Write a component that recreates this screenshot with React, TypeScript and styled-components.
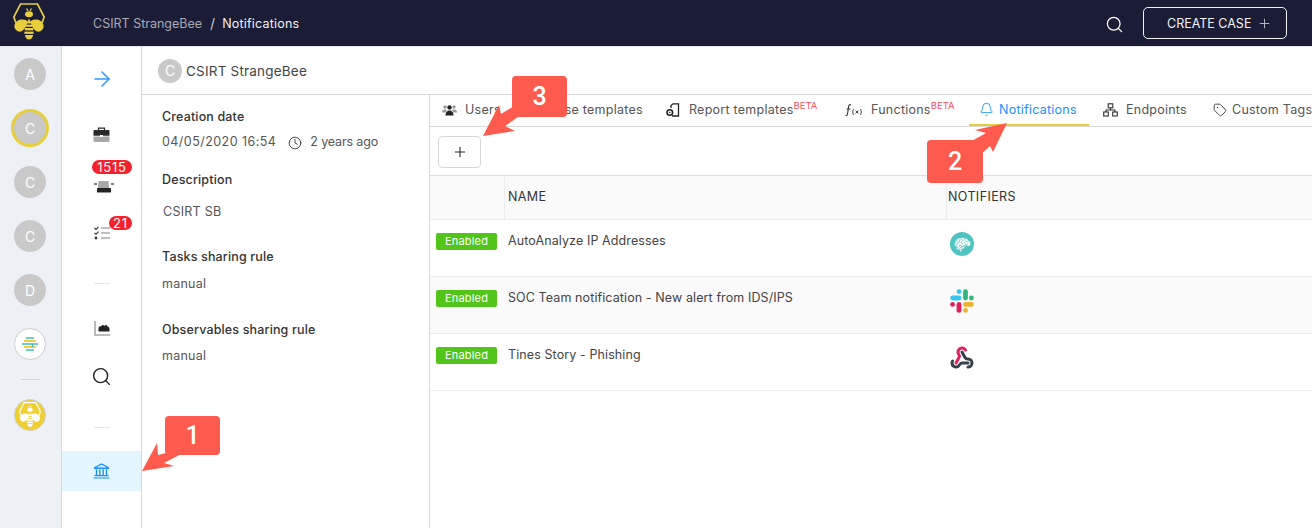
import React from "react";
import styled, { createGlobalStyle } from "styled-components";
import { ArrowRight, Search, Plus, Clock, Bell, Tag } from "lucide-react";
import { GiBrain } from "react-icons/gi";

const Global = createGlobalStyle`
  html, body { margin: 0; padding: 0; background: #fff; }
  body { font-family: Inter, "Noto Sans", "Liberation Sans", sans-serif; overflow: hidden; }
  #root { width: 1312px; height: 528px; }
  * { box-sizing: border-box; }
`;

const Page = styled.div`
  position: relative;
  width: 1312px;
  height: 528px;
  overflow: hidden;
  display: flex;
  flex-direction: column;
`;
const TopBar = styled.header`
  height: 46px;
  flex: none;
  background: #1b1c36;
  display: flex;
  align-items: center;
  padding: 0 25px 0 13px;
`;
const LogoBox = styled.div`
  width: 32px;
  height: 38px;
  margin-right: 48px;
  margin-top: -2px;
`;
const Crumb = styled.span<{ $active?: boolean }>`
  font-size: 12.5px;
  letter-spacing: ${(p) => (p.$active ? "0.2px" : "0")};
  color: ${(p) => (p.$active ? "#f2f2f4" : "#a9aab4")};
  font-weight: 400;
`;
const CrumbSep = styled.span`
  color: #c8c8cf;
  font-size: 14px;
  margin: 0 7px 0 8px;
`;
const Grow = styled.div`
  flex: 1;
`;
const TopSearch = styled.div`
  display: flex;
  color: #fff;
  margin-right: 19px;
  margin-top: 2px;
`;
const CreateBtn = styled.button`
  width: 144px;
  height: 32px;
  border: 1px solid #f2f2f4;
  border-radius: 5px;
  background: transparent;
  color: #f2f2f4;
  font: 400 12.5px Inter, sans-serif;
  display: flex;
  align-items: center;
  padding: 0 0 0 23px;
  gap: 6px;
  svg { color: #bcbcc4; }
`;
const Body = styled.div`
  flex: 1;
  display: flex;
  min-height: 0;
`;
const Rail = styled.aside`
  width: 62px;
  flex: none;
  background: #edf1f5;
  border-right: 1px solid #d5d7da;
  border-top: 1px solid #e4e6e9;
  padding-right: 1px;
  display: flex;
  flex-direction: column;
  align-items: center;
`;
const RailItem = styled.div`
  height: 54px;
  flex: none;
  display: flex;
  align-items: center;
  justify-content: center;
`;
const OrgAvatar = styled.div<{ $selected?: boolean }>`
  width: ${(p) => (p.$selected ? "38px" : "32px")};
  height: ${(p) => (p.$selected ? "38px" : "32px")};
  border-radius: 50%;
  background: #c9c9c9;
  color: #fff;
  font-size: 14px;
  display: flex;
  align-items: center;
  justify-content: center;
  border: ${(p) => (p.$selected ? "3px solid #e8cd3c" : "none")};
`;
const LogoAvatar = styled.div<{ $bg: string }>`
  width: 32px;
  height: 32px;
  border-radius: 50%;
  background: ${(p) => p.$bg};
  border: 1px solid #cfcfcf;
  display: flex;
  align-items: center;
  justify-content: center;
`;
const RailDivider = styled.div`
  width: 19px;
  height: 1px;
  background: #d2d4d7;
  margin: 8px 0;
`;
const Nav = styled.nav`
  width: 80px;
  flex: none;
  border-right: 1px solid #d5d7da;
  border-top: 1px solid #e4e6e9;
  display: flex;
  flex-direction: column;
  align-items: center;
  padding-top: 8px;
`;
const NavItem = styled.div<{ $top?: number; $h?: number; $active?: boolean }>`
  position: relative;
  width: 100%;
  height: ${(p) => p.$h ?? 48}px;
  margin-top: ${(p) => p.$top ?? 0}px;
  display: flex;
  align-items: center;
  justify-content: center;
  flex: none;
  background: ${(p) => (p.$active ? "#e4f6fd" : "transparent")};
  color: ${(p) => (p.$active ? "#1890ff" : "#222")};
`;
const NavDivider = styled.div<{ $top: number }>`
  width: 16px;
  height: 1px;
  background: #e6e6e6;
  margin-top: ${(p) => p.$top}px;
`;
const Count = styled.span<{ $w: number; $top: number }>`
  position: absolute;
  top: ${(p) => p.$top}px;
  left: ${(p) => 70 - p.$w}px;
  width: ${(p) => p.$w}px;
  height: 14px;
  border-radius: 7px;
  background: #f5222d;
  color: #fff;
  font-size: 13px;
  letter-spacing: 0.8px;
  line-height: 14px;
  text-align: center;
`;
const Main = styled.main`
  flex: 1;
  display: flex;
  flex-direction: column;
  min-width: 0;
  border-top: 1px solid #e4e6e9;
`;
const TitleBar = styled.div`
  height: 48px;
  flex: none;
  border-bottom: 1px solid #d9d9d9;
  display: flex;
  align-items: center;
  padding: 0 16px;
  gap: 4px;
`;
const TitleAvatar = styled.div`
  width: 24px;
  height: 24px;
  border-radius: 50%;
  background: #c9c9c9;
  color: #fff;
  font-size: 14px;
  display: flex;
  align-items: center;
  justify-content: center;
`;
const Title = styled.span`
  font-size: 13.5px;
  letter-spacing: 0.2px;
  color: #444;
`;
const Split = styled.div`
  flex: 1;
  display: flex;
  min-height: 0;
`;
const Details = styled.section`
  width: 288px;
  flex: none;
  border-right: 1px solid #d9d9d9;
  padding: 14px 0 0 20px;
`;
const Label = styled.div<{ $top?: number }>`
  font-size: 12.5px;
  letter-spacing: 0.15px;
  line-height: 16px;
  font-weight: 500;
  color: #333;
  margin-top: ${(p) => p.$top ?? 0}px;
`;
const Value = styled.div<{ $top: number; $indent?: number }>`
  display: flex;
  align-items: center;
  font-size: 12.5px;
  letter-spacing: 0.25px;
  line-height: 16px;
  color: #555;
  margin-top: ${(p) => p.$top}px;
  margin-left: ${(p) => p.$indent ?? 0}px;
`;
const DateText = styled.span`
  letter-spacing: 0.45px;
`;
const AgoText = styled.span`
  letter-spacing: -0.15px;
`;
const ClockWrap = styled.span`
  display: flex;
  margin: 1px 8px 0 12px;
`;
const Content = styled.section`
  flex: 1;
  min-width: 0;
  display: flex;
  flex-direction: column;
`;
const Tabs = styled.div`
  height: 32px;
  flex: none;
  display: flex;
  gap: 2px;
  border-bottom: 1px solid #d9d9d9;
`;
const Tab = styled.div<{ $active?: boolean; $w: number }>`
  flex: none;
  width: ${(p) => p.$w}px;
  height: 31px;
  padding: 0 0 0 12px;
  display: flex;
  align-items: center;
  white-space: nowrap;
  font-size: 12.5px;
  letter-spacing: 0.25px;
  color: ${(p) => (p.$active ? "#1890ff" : "#555")};
  font-weight: 400;
  border-bottom: 2px solid ${(p) => (p.$active ? "#e8cd3c" : "transparent")};
`;
const TabIcon = styled.span<{ $gap: number; $shift?: number }>`
  display: flex;
  margin-right: ${(p) => p.$gap}px;
  margin-left: ${(p) => p.$shift ?? 0}px;
`;
const Beta = styled.sup`
  font-size: 9.5px;
  color: #f5515f;
  line-height: 0;
  letter-spacing: 0;
  position: relative;
  top: -4px;
  vertical-align: super;
`;
const Toolbar = styled.div`
  height: 49px;
  flex: none;
  padding: 9px 8px;
  border-bottom: 1px solid #dedede;
`;
const AddBtn = styled.button`
  width: 43px;
  height: 32px;
  background: #fff;
  border: 1px solid #d9d9d9;
  border-radius: 4px;
  display: flex;
  align-items: center;
  justify-content: center;
  color: #000;
  padding: 0;
`;
const TableHead = styled.div`
  height: 44px;
  flex: none;
  display: grid;
  grid-template-columns: 75px 442px 1fr;
  background: #fafafa;
  border-bottom: 1px solid #ececec;
`;
const HeadCell = styled.div`
  display: flex;
  align-items: center;
  padding: 0 0 2px 3px;
  font-size: 12.5px;
  letter-spacing: 0.4px;
  color: #333;
  font-weight: 400;
  border-right: 1px solid #ececec;
  &:last-child { border-right: none; padding-left: 1px; }
`;
const Row = styled.div<{ $alt?: boolean }>`
  height: 57px;
  flex: none;
  display: grid;
  grid-template-columns: 75px 442px 1fr;
  background: ${(p) => (p.$alt ? "#fafafa" : "#fff")};
  border-bottom: 1px solid #ececec;
`;
const StatusCell = styled.div`
  padding: 13px 0 0 6px;
`;
const Enabled = styled.span`
  display: block;
  width: 61px;
  height: 17px;
  border-radius: 2px;
  background: #52c41a;
  color: #fff;
  font-size: 11px;
  letter-spacing: 0.2px;
  line-height: 17px;
  text-align: center;
`;
const NameCell = styled.div`
  padding: 12px 0 0 3px;
  font-size: 12.5px;
  letter-spacing: 0.1px;
  line-height: 17px;
  color: #444;
`;
const IconCell = styled.div`
  padding: 12px 0 0 3px;
  display: flex;
  align-items: flex-start;
`;
const BrainDisc = styled.div`
  width: 24px;
  height: 24px;
  border-radius: 50%;
  background: #4fc4c0;
  color: #fff;
  display: flex;
  align-items: center;
  justify-content: center;
`;
const Callout = styled.div<{ $x: number; $y: number; $w: number; $h: number }>`
  position: absolute;
  left: ${(p) => p.$x}px;
  top: ${(p) => p.$y}px;
  width: ${(p) => p.$w}px;
  height: ${(p) => p.$h}px;
  background: #ff5a4e;
  border-radius: 4px;
  color: #fff;
  font: 500 25px Roboto, "Liberation Sans", sans-serif;
  display: flex;
  align-items: center;
  justify-content: center;
`;
const ArrowLayer = styled.svg`
  position: absolute;
  left: 0;
  top: 0;
  pointer-events: none;
`;

const BeeLogo = ({ color = "#e8cd3c", size = 32 }: { color?: string; size?: number }) => (
  <svg width={size} height={(size * 38) / 32} viewBox="0 0 32 38" fill="none">
    <path d="M3 20 L0.8 14 L7.5 1 H24.5 L31.2 14 L29 20" stroke={color} strokeWidth="1.7" />
    <path d="M13.5 5.5 L15 8 M18.5 5.5 L17 8" stroke={color} strokeWidth="1.3" />
    <ellipse cx="16" cy="11.2" rx="4" ry="3" fill={color} />
    <path d="M14.5 18 C9 15 3 17 1.5 22 C0.5 27 6 30 9 28 C12 26 14 22 14.5 18Z" fill={color} />
    <path d="M17.5 18 C23 15 29 17 30.5 22 C31.5 27 26 30 23 28 C20 26 18 22 17.5 18Z" fill={color} />
    <path d="M16 15.5 L18.4 20.5 H13.6Z" fill={color} />
    <rect x="12.4" y="21.6" width="7.2" height="2.2" fill={color} />
    <rect x="11.7" y="25" width="8.6" height="2.4" fill={color} />
    <rect x="11.4" y="28.6" width="9.2" height="2.3" fill={color} />
    <path d="M11.8 32 H20.2 C19.5 35 18 36.6 16 36.6 C14 36.6 12.5 35 11.8 32Z" fill={color} />
  </svg>
);

const Briefcase = () => (
  <svg width="17" height="16" viewBox="0 0 17 16">
    <path d="M5.5 3V1.2H11.5V3" fill="none" stroke="#2a2a2a" strokeWidth="1.2" />
    <path d="M1.5 3H15.5Q16.5 3 16.5 4V8.8H0.5V4Q0.5 3 1.5 3Z" fill="#2a2a2a" />
    <path d="M0.5 9.4H16.5V14Q16.5 15 15.5 15H1.5Q0.5 15 0.5 14Z" fill="#a8a8a8" />
    <rect x="7" y="8" width="3" height="2" fill="#fff" />
  </svg>
);
const Siren = () => (
  <svg width="24" height="20" viewBox="0 0 24 20">
    <path d="M8.5 8H18.5L19 15H8Z" fill="#a8a8a8" />
    <rect x="7" y="15" width="14" height="4.4" rx="0.6" fill="#222" />
    <path d="M4 11H7M21 11H24" stroke="#555" strokeWidth="1.4" />
  </svg>
);
const TaskList = () => (
  <svg width="16" height="14" viewBox="0 0 16 14" fill="none">
    <path d="M0.5 2 L2 3.4 L4.5 0.8 M0.5 6.8 L2 8.2 L4.5 5.6" stroke="#333" strokeWidth="1.1" />
    <circle cx="2" cy="12" r="1.4" fill="#333" />
    <path d="M7 2H16M7 7H16M7 12H16" stroke="#aaa" strokeWidth="1.5" />
  </svg>
);
const ChartIcon = () => (
  <svg width="16" height="15" viewBox="0 0 16 15" fill="none">
    <path d="M1 0V14H16" stroke="#a8a8a8" strokeWidth="1.6" />
    <path d="M4.5 10.5V7.5C4.5 6 6 5 7 5.5C8 3.5 9.5 3.5 10.5 5C11.5 3.5 13 4 13.5 5.5C15 5.5 15.5 7 15.5 8V10.5Z" fill="#222" />
  </svg>
);
const BankIcon = () => (
  <svg width="17" height="16" viewBox="0 0 17 16" fill="none" stroke="#1890ff">
    <path d="M1 5 L8.5 1 L16 5 Z" strokeWidth="1.2" fill="#d8eefe" />
    <path d="M1 5.6H16" strokeWidth="1" />
    <path d="M3.5 6.5V12M6.8 6.5V12M10.2 6.5V12M13.5 6.5V12" strokeWidth="1.4" />
    <path d="M1.5 12.7H15.5M0.5 15H16.5" strokeWidth="1.2" />
  </svg>
);
const UsersIcon = () => (
  <svg width="15" height="12" viewBox="0 0 15 12">
    <circle cx="3" cy="3" r="1.7" fill="#999" />
    <circle cx="12" cy="3" r="1.7" fill="#999" />
    <path d="M0 8.5C0 6 1.5 5.4 3 5.4C4 5.4 4.5 5.6 5 6L3.6 8.5Z M15 8.5C15 6 13.5 5.4 12 5.4C11 5.4 10.5 5.6 10 6L11.4 8.5Z" fill="#999" />
    <circle cx="7.5" cy="3.4" r="2.2" fill="#222" />
    <path d="M3.5 11.5C3.5 8 5.5 6.6 7.5 6.6C9.5 6.6 11.5 8 11.5 11.5Z" fill="#222" />
  </svg>
);
const CaseIcon = () => (
  <svg width="14" height="14" viewBox="0 0 14 14" fill="none" stroke="#333" strokeWidth="1.2">
    <path d="M4 1.5H12V12.5H3" />
  </svg>
);
const ReportIcon = () => (
  <svg width="14" height="14" viewBox="0 0 14 14" fill="none" stroke="#222" strokeWidth="1.3">
    <path d="M5 5V2.5L7 0.8H12.5V13H6" />
    <circle cx="3.8" cy="9.5" r="2.8" strokeWidth="1.6" />
    <circle cx="3.8" cy="9.5" r="0.8" fill="#222" stroke="none" />
  </svg>
);
const EndpointsIcon = () => (
  <svg width="15" height="14" viewBox="0 0 15 14" fill="none" stroke="#333" strokeWidth="1.1">
    <rect x="5.2" y="0.8" width="4.6" height="4" />
    <rect x="0.7" y="9" width="4.6" height="4" />
    <rect x="9.7" y="9" width="4.6" height="4" />
    <path d="M7.5 4.8V7H3V9M7.5 7H12V9" />
  </svg>
);
const StrangeLogo = () => (
  <svg width="16" height="16" viewBox="0 0 16 16" fill="none" strokeWidth="2">
    <path d="M4 2H12" stroke="#6fd0d0" />
    <path d="M2 5H14" stroke="#f0d040" />
    <path d="M0 8H16" stroke="#6fd0d0" />
    <path d="M2 11H14" stroke="#f0d040" />
    <path d="M4 14H12" stroke="#6fd0d0" />
    <path d="M10.5 8V11" stroke="#4fb8b8" strokeWidth="1.6" />
  </svg>
);
const BrainIcon = () => (
  <BrainDisc><GiBrain size={17} /></BrainDisc>
);
const SlackIcon = () => (
  <svg width="24" height="24" viewBox="0 0 24 24" fill="none" strokeLinecap="round" strokeWidth="4.8">
    <path d="M9 2.6V2.6" stroke="#36c5f0" />
    <path d="M2.6 9H9" stroke="#36c5f0" />
    <path d="M15.5 2.6V9" stroke="#2eb67d" />
    <path d="M21.4 9V9" stroke="#2eb67d" />
    <path d="M15.5 21.4V21.4" stroke="#ecb22e" />
    <path d="M15.5 15.4H21.4" stroke="#ecb22e" />
    <path d="M9 15.4V21.4" stroke="#e01e5a" />
    <path d="M2.6 15.4V15.4" stroke="#e01e5a" />
  </svg>
);
const WebhookIcon = () => (
  <svg width="24" height="24" viewBox="0 0 24 24" fill="none" strokeWidth="3" strokeLinecap="round" strokeLinejoin="round">
    <path d="M18 16.98h-5.99c-1.1 0-1.95.94-2.48 1.9A4 4 0 0 1 2 17c.01-.7.2-1.4.57-2" stroke="#37414b" />
    <path d="m12 6 3.13 5.73C15.66 12.7 16.9 13 18 13a4 4 0 0 1 0 8" stroke="#37414b" />
    <path d="m6 17 3.13-5.78c.53-.97.1-2.18-.5-3.1a4 4 0 1 1 6.89-4.06" stroke="#e3205f" />
  </svg>
);

const rows = [
  { name: "AutoAnalyze IP Addresses", icon: <BrainIcon /> },
  { name: "SOC Team notification - New alert from IDS/IPS", icon: <SlackIcon /> },
  { name: "Tines Story - Phishing", icon: <WebhookIcon /> },
];

export default function App() {
  return (
    <Page>
      <Global />
      <TopBar>
        <LogoBox><BeeLogo /></LogoBox>
        <Crumb>CSIRT StrangeBee</Crumb>
        <CrumbSep>/</CrumbSep>
        <Crumb $active>Notifications</Crumb>
        <Grow />
        <TopSearch><Search size={19} strokeWidth={1.6} /></TopSearch>
        <CreateBtn>CREATE CASE<Plus size={15} strokeWidth={1.5} /></CreateBtn>
      </TopBar>
      <Body>
        <Rail>
          {["A", "C", "C", "C", "D"].map((l, i) => (
            <RailItem key={i}><OrgAvatar $selected={i === 1}>{l}</OrgAvatar></RailItem>
          ))}
          <RailItem><LogoAvatar $bg="#fff"><StrangeLogo /></LogoAvatar></RailItem>
          <RailDivider />
          <RailItem><LogoAvatar $bg="#f0cf30"><BeeLogo color="#fff" size={22} /></LogoAvatar></RailItem>
        </Rail>
        <Nav>
          <NavItem><ArrowRight size={24} color="#2e9bff" strokeWidth={1.5} /></NavItem>
          <NavItem $top={8}><Briefcase /></NavItem>
          <NavItem>
            <Siren />
            <Count $w={40} $top={1}>1515</Count>
          </NavItem>
          <NavItem $top={2}>
            <TaskList />
            <Count $w={23} $top={7}>21</Count>
          </NavItem>
          <NavDivider $top={26} />
          <NavItem $top={20}><ChartIcon /></NavItem>
          <NavItem><Search size={21} strokeWidth={1.6} color="#222" /></NavItem>
          <NavDivider $top={27} />
          <NavItem $top={23} $h={40} $active><BankIcon /></NavItem>
        </Nav>
        <Main>
          <TitleBar>
            <TitleAvatar>C</TitleAvatar>
            <Title>CSIRT StrangeBee</Title>
          </TitleBar>
          <Split>
            <Details>
              <Label>Creation date</Label>
              <Value $top={9}>
                <DateText>04/05/2020 16:54</DateText>
                <ClockWrap><Clock size={14} strokeWidth={1.5} color="#333" /></ClockWrap>
                <AgoText>2 years ago</AgoText>
              </Value>
              <Label $top={22}>Description</Label>
              <Value $top={16} $indent={1}>CSIRT SB</Value>
              <Label $top={29}>Tasks sharing rule</Label>
              <Value $top={11}>manual</Value>
              <Label $top={30}>Observables sharing rule</Label>
              <Value $top={10}>manual</Value>
            </Details>
            <Content>
              <Tabs>
                <Tab $w={80}><TabIcon $gap={8}><UsersIcon /></TabIcon>Users</Tab>
                <Tab $w={140}><TabIcon $gap={10}><CaseIcon /></TabIcon>Case templates</Tab>
                <Tab $w={177}><TabIcon $gap={9}><ReportIcon /></TabIcon>Report templates<Beta>BETA</Beta></Tab>
                <Tab $w={134}>
                  <TabIcon $gap={8}>
                    <svg width="18" height="14" viewBox="0 0 18 14" fill="none" stroke="#333" strokeWidth="1.1">
                      <path d="M6 2C4.5 1 3.8 2 3.5 4L2.5 11C2.2 13 1.2 13 0.5 12.4M1.5 6H5.5" />
                      <path d="M8.5 6C7.5 8 7.5 10 8.5 12M15.5 6C16.5 8 16.5 10 15.5 12M10.5 7.5L13.5 10.5M13.5 7.5L10.5 10.5" strokeWidth="0.9" />
                    </svg>
                  </TabIcon>
                  Functions<Beta>BETA</Beta>
                </Tab>
                <Tab $w={120} $active><TabIcon $gap={5} $shift={-2}><Bell size={15} strokeWidth={1.4} /></TabIcon>Notifications</Tab>
                <Tab $w={109}><TabIcon $gap={8}><EndpointsIcon /></TabIcon>Endpoints</Tab>
                <Tab $w={108}><TabIcon $gap={5} $shift={-1}><Tag size={14} strokeWidth={1.5} color="#333" /></TabIcon>Custom Tags</Tab>
              </Tabs>
              <Toolbar><AddBtn><Plus size={16} strokeWidth={1.3} /></AddBtn></Toolbar>
              <TableHead>
                <HeadCell />
                <HeadCell>NAME</HeadCell>
                <HeadCell>NOTIFIERS</HeadCell>
              </TableHead>
              {rows.map((r, i) => (
                <Row key={r.name} $alt={i === 1}>
                  <StatusCell><Enabled>Enabled</Enabled></StatusCell>
                  <NameCell>{r.name}</NameCell>
                  <IconCell>{r.icon}</IconCell>
                </Row>
              ))}
            </Content>
          </Split>
        </Main>
      </Body>
      <ArrowLayer width="1312" height="528" viewBox="0 0 1312 528">
        <g fill="#ff5a4e">
          <polygon points="142,471 157,443 158,455 170,452 185,452 164,463 174,466" />
          <polygon points="1007,123 975,130 986,133 970,142 980,155 990,146 993,152" />
          <polygon points="483,136 499,105 501,114 516,105 525,112 505,126 515,131" />
        </g>
      </ArrowLayer>
      <Callout $x={165} $y={416} $w={55} $h={39}>1</Callout>
      <Callout $x={927} $y={140} $w={56} $h={43}>2</Callout>
      <Callout $x={512} $y={76} $w={55} $h={41}>3</Callout>
    </Page>
  );
}
